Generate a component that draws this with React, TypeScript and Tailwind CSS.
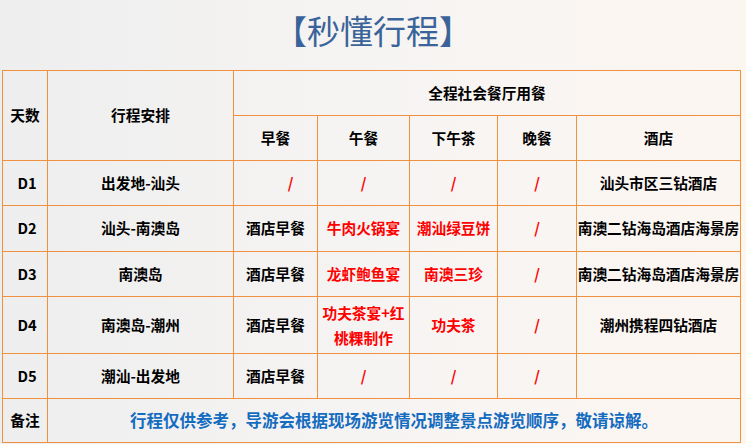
import React from 'react';

type Cell = { text: string; red?: boolean; className?: string };

const rows: { day: string; route: string; meals: Cell[]; hotel: string; h: string }[] = [
  {
    day: 'D1',
    route: '出发地-汕头',
    meals: [
      { text: '/', red: true, className: 'pl-[30px]' },
      { text: '/', red: true },
      { text: '/', red: true },
      { text: '/', red: true },
    ],
    hotel: '汕头市区三钻酒店',
    h: 'h-[45px]',
  },
  {
    day: 'D2',
    route: '汕头-南澳岛',
    meals: [
      { text: '酒店早餐' },
      { text: '牛肉火锅宴', red: true },
      { text: '潮汕绿豆饼', red: true },
      { text: '/', red: true },
    ],
    hotel: '南澳二钻海岛酒店海景房',
    h: 'h-[46px]',
  },
  {
    day: 'D3',
    route: '南澳岛',
    meals: [
      { text: '酒店早餐' },
      { text: '龙虾鲍鱼宴', red: true },
      { text: '南澳三珍', red: true },
      { text: '/', red: true },
    ],
    hotel: '南澳二钻海岛酒店海景房',
    h: 'h-[45px]',
  },
  {
    day: 'D4',
    route: '南澳岛-潮州',
    meals: [
      { text: '酒店早餐' },
      { text: '功夫茶宴+红桃粿制作', red: true, className: 'leading-[25px] px-[4px]' },
      { text: '功夫茶', red: true },
      { text: '/', red: true },
    ],
    hotel: '潮州携程四钻酒店',
    h: 'h-[57px]',
  },
  {
    day: 'D5',
    route: '潮汕-出发地',
    meals: [
      { text: '酒店早餐' },
      { text: '/', red: true },
      { text: '/', red: true },
      { text: '/', red: true },
    ],
    hotel: '',
    h: 'h-[45px]',
  },
];

const td = 'border border-[#f0913f] text-center align-middle p-0';

export default function App() {
  return (
    <div
      className="w-[746px] h-[444px] overflow-hidden bg-gradient-to-r from-[#eeeeee] via-[#f6f4f3] to-[#fcf6f1] text-black"
      style={{ fontFamily: '"Noto Sans CJK SC", "Noto Sans", sans-serif' }}
    >
      {/* title */}
      <div className="h-[70px] text-center">
        <h1 className="text-[33px] leading-[60px] font-normal text-[#3a6499]">【秒懂行程】</h1>
      </div>

      <table className="ml-[2px] w-[739px] table-fixed border-collapse text-[14.7px] font-bold">
        <colgroup>
          <col className="w-[45px]" />
          <col className="w-[186px]" />
          <col className="w-[84px]" />
          <col className="w-[92px]" />
          <col className="w-[88px]" />
          <col className="w-[79px]" />
          <col className="w-[164px]" />
        </colgroup>
        <tbody>
          <tr className="h-[45px]">
            <td rowSpan={2} className={td}>天数</td>
            <td rowSpan={2} className={td}>行程安排</td>
            <td colSpan={5} className={td}>全程社会餐厅用餐</td>
          </tr>
          <tr className="h-[45px]">
            <td className={td}>早餐</td>
            <td className={td}>午餐</td>
            <td className={td}>下午茶</td>
            <td className={td}>晚餐</td>
            <td className={td}>酒店</td>
          </tr>
          {rows.map((r) => (
            <tr key={r.day} className={r.h}>
              <td className={`${td} pl-[4px]`}>{r.day}</td>
              <td className={td}>{r.route}</td>
              {r.meals.map((m, i) => (
                <td
                  key={i}
                  className={`${td} ${m.red ? 'text-[#ff0000]' : ''} ${m.className ?? ''}`}
                >
                  {m.text}
                </td>
              ))}
              <td className={`${td} whitespace-nowrap overflow-visible`}>{r.hotel}</td>
            </tr>
          ))}
          <tr className="h-[44px]">
            <td className={td}>备注</td>
            <td colSpan={6} className={`${td} text-[16.5px] text-[#146cc0]`}>
              行程仅供参考，导游会根据现场游览情况调整景点游览顺序，敬请谅解。
            </td>
          </tr>
        </tbody>
      </table>
    </div>
  );
}
